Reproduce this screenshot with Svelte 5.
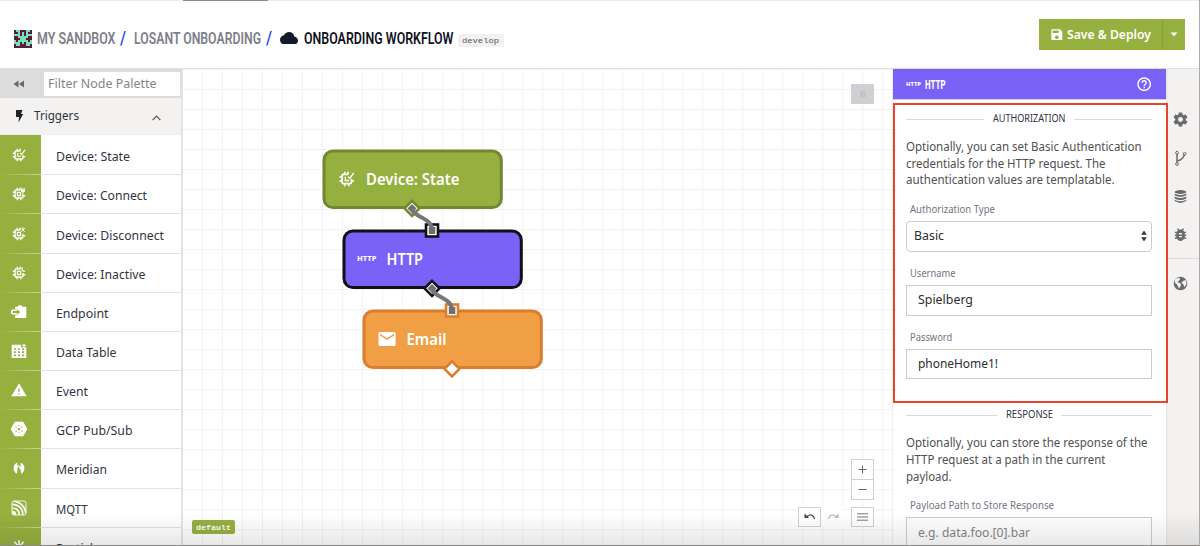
<script>
  const cog = 'M12,15.5A3.5,3.5 0 0,1 8.5,12A3.5,3.5 0 0,1 12,8.5A3.5,3.5 0 0,1 15.5,12A3.5,3.5 0 0,1 12,15.5M19.43,12.97C19.47,12.65 19.5,12.33 19.5,12C19.5,11.67 19.47,11.34 19.43,11L21.54,9.37C21.73,9.22 21.78,8.95 21.66,8.73L19.66,5.27C19.54,5.05 19.27,4.96 19.05,5.05L16.56,6.05C16.04,5.66 15.5,5.32 14.87,5.07L14.5,2.42C14.46,2.18 14.25,2 14,2H10C9.75,2 9.54,2.18 9.5,2.42L9.13,5.07C8.5,5.32 7.96,5.66 7.44,6.05L4.95,5.05C4.73,4.96 4.46,5.05 4.34,5.27L2.34,8.73C2.21,8.95 2.27,9.22 2.46,9.37L4.57,11C4.53,11.34 4.5,11.67 4.5,12C4.5,12.33 4.53,12.65 4.57,12.97L2.46,14.63C2.27,14.78 2.21,15.05 2.34,15.27L4.34,18.73C4.46,18.95 4.73,19.03 4.95,18.95L7.44,17.94C7.96,18.34 8.5,18.68 9.13,18.93L9.5,21.58C9.54,21.82 9.75,22 10,22H14C14.25,22 14.46,21.82 14.5,21.58L14.87,18.93C15.5,18.67 16.04,18.34 16.56,17.94L19.05,18.95C19.27,19.03 19.54,18.95 19.66,18.73L21.66,15.27C21.78,15.05 21.73,14.78 21.54,14.63L19.43,12.97Z';
  const bug = 'M20 8h-2.81c-.45-.78-1.07-1.45-1.82-1.96L17 4.41 15.59 3l-2.17 2.17C12.96 5.06 12.49 5 12 5s-.96.06-1.41.17L8.41 3 7 4.41l1.62 1.63C7.88 6.55 7.26 7.22 6.81 8H4v2h2.09c-.05.33-.09.66-.09 1v1H4v2h2v1c0 .34.04.67.09 1H4v2h2.81c1.04 1.79 2.97 3 5.19 3s4.15-1.21 5.19-3H20v-2h-2.09c.05-.33.09-.66.09-1v-1h2v-2h-2v-1c0-.34-.04-.67-.09-1H20V8zm-6 8h-4v-2h4v2zm0-4h-4v-2h4v2z';
  const cloud = 'M19.35 10.04C18.67 6.59 15.64 4 12 4 9.11 4 6.6 5.64 5.35 8.04 2.34 8.36 0 10.91 0 14c0 3.31 2.69 6 6 6h13c2.76 0 5-2.24 5-5 0-2.64-2.05-4.78-4.65-4.96z';
  const mail = 'M20 4H4c-1.1 0-1.99.9-1.99 2L2 18c0 1.1.9 2 2 2h16c1.1 0 2-.9 2-2V6c0-1.1-.9-2-2-2zm0 4l-8 5-8-5V6l8 5 8-5v2z';
  const help = 'M11 18h2v-2h-2v2zm1-16C6.48 2 2 6.48 2 12s4.48 10 10 10 10-4.48 10-10S17.52 2 12 2zm0 18c-4.41 0-8-3.59-8-8s3.59-8 8-8 8 3.59 8 8-3.59 8-8 8zm0-14c-2.21 0-4 1.79-4 4h2c0-1.1.9-2 2-2s2 .9 2 2c0 2-3 1.75-3 5h2c0-2.25 3-2.5 3-5 0-2.21-1.79-4-4-4z';
  const save = 'M17 3H5c-1.11 0-2 .9-2 2v14c0 1.1.89 2 2 2h14c1.1 0 2-.9 2-2V7l-4-4zm-5 16c-1.66 0-3-1.34-3-3s1.34-3 3-3 3 1.34 3 3-1.34 3-3 3zm3-10H5V5h10v4z';

  const avatar = [
    '.##...##.',
    '..#.#.#..',
    '###.#.###',
    '..#####..',
    '...###...',
    '#.#####.#',
    '###.#.###',
    '.##...##.',
    '.........'
  ];

  const nodes = [
    { icon: 'state', name: 'Device: State', w: 74 },
    { icon: 'connect', name: 'Device: Connect', w: 91 },
    { icon: 'disconnect', name: 'Device: Disconnect', w: 108 },
    { icon: 'inactive', name: 'Device: Inactive', w: 89.5 },
    { icon: 'endpoint', name: 'Endpoint', w: 52.5 },
    { icon: 'table', name: 'Data Table', w: 60.5 },
    { icon: 'event', name: 'Event', w: 32 },
    { icon: 'gcp', name: 'GCP Pub/Sub', w: 76.5 },
    { icon: 'meridian', name: 'Meridian', w: 51 },
    { icon: 'mqtt', name: 'MQTT', w: 31.5 },
    { icon: 'particle', name: 'Particle', w: 44 }
  ];
</script>

{#snippet label(text, w, size, h, base, cls = '')}
  <svg class="label {cls}" width={w} height={h}>
    <text x="0" y={base} font-size={size} textLength={w} lengthAdjust="spacingAndGlyphs">{text}</text>
  </svg>
{/snippet}

{#snippet chip(kind)}
  <g fill="none" stroke="currentColor">
    <path d="M14 5H7Q5 5 5 7v10q0 2 2 2h10q2 0 2-2v-5" stroke-width="2.5" />
    <path d="M9 1v4M14 1v4M9 19v4M15 19v4M1 9h4M1 15h4M19 15h4" stroke-width="2.5" />
    {#if kind === 'state'}
      <path d="M9.800 8.500v5.700h5.700" stroke-width="2" />
      <path d="M14 8.500l2.700 2.500L22.500 3" stroke-width="2" />
    {:else}
      <rect x="9.200" y="9.200" width="5.600" height="5.600" stroke-width="2.200" />
      {#if kind === 'connect'}
        <path d="M17 1v3M21 1v3M19 6v5" stroke-width="1.800" />
        <path d="M15.500 4h7v3l-2 2h-3l-2-2z" fill="currentColor" stroke="none" />
      {:else if kind === 'disconnect'}
        <path d="M16 8l6-6M17 3l5 5M17 2h5" stroke-width="1.700" />
      {:else}
        <path d="M17.500 2v5q1 2 5 2" stroke-width="2.200" />
      {/if}
    {/if}
  </g>
{/snippet}

<div class="app">
  <div class="tabstrip"><span></span></div>
  <header>
    <nav>
      <svg class="avatar" width="18" height="18" viewBox="0 0 9 9" shape-rendering="crispEdges">
        <rect width="9" height="9" fill="#5b1a3e" />
        {#each avatar as row, y}
          {#each row.split('') as cell, x}
            {#if cell === '#'}<rect {x} {y} width="1" height="1" fill="#78e2b6" />{/if}
          {/each}
        {/each}
      </svg>
      {@render label('MY SANDBOX', 78.5, 17.2, 20, 16.2, 'crumb')}
      {@render label('/', 6, 17.5, 20, 16.2, 'slash s1')}
      {@render label('LOSANT ONBOARDING', 127, 17.2, 20, 16.2, 'crumb')}
      {@render label('/', 6, 17.5, 20, 16.2, 'slash s2')}
      <svg class="cloud" width="18" height="12.5" viewBox="0 4 24 16" preserveAspectRatio="none"><path d={cloud} /></svg>
      {@render label('ONBOARDING WORKFLOW', 149.5, 17.2, 20, 16.2, 'crumb current')}
      <span class="version">{@render label('develop', 37, 7.8, 13, 8.8, 'mono')}</span>
    </nav>
    <div class="deploy">
      <div class="main">
        <svg width="11.6" height="11.6" viewBox="2.5 2.500 19 19" fill="#fff"><path d={save} /></svg>
        {@render label('Save & Deploy', 84, 12.9, 20, 14, 'bold')}
      </div>
      <div class="drop"><svg width="8" height="5" viewBox="0 0 8 5"><path d="M.5.5h7L4 4.5z" fill="#fff" /></svg></div>
    </div>
  </header>

  <main>
    <aside class="palette">
      <div class="filter">
        <div class="collapse">
          <svg width="12" height="8" viewBox="0 0 12 8"><path d="M5.5.5v7L.5 4zM11 .5v7L6 4z" fill="#666" /></svg>
        </div>
        <div class="search">{@render label('Filter Node Palette', 108.500, 12.8, 20, 13.8, 'hint')}</div>
      </div>
      <div class="group">
        <svg width="9" height="13" viewBox="0 0 9 13"><path d="M1 0h6.5L6 4h2.2L3.5 12.6 4 7H1z" fill="#222" /></svg>
        {@render label('Triggers', 45, 12.8, 20, 14.3, 'dark')}
        <svg class="chev" width="9" height="6" viewBox="0 0 9 6"><path d="M.6 5.2l3.9-4 3.9 4" fill="none" stroke="#555" stroke-width="1.2" /></svg>
      </div>
      <div class="rows">
        {#each nodes as n}
          <div class="row">
            <div class="ico">
              <svg width="16" height="16" viewBox="0 0 24 24">
                {#if ['state', 'connect', 'disconnect', 'inactive'].includes(n.icon)}
                  <g transform="translate(1.800 1.800) scale(.85)">{@render chip(n.icon)}</g>
                {:else if n.icon === 'endpoint'}
                  <path d="M6 4h4l1.500-2h4L17 4h5q1 0 1 1v15q0 1-1 1H7q-1 0-1-1v-3h4l5-5-5-5H6z" fill="#fff" />
                  <path d="M10 6h9v12h-9z" fill="#fff" />
                  <path d="M0 9.500h2v5H0z" fill="#fff" />
                  <path d="M1 8.300h7.500V6L15 12l-6.500 6v-2.300H1z" fill="#fff" />
                  <path d="M2.500 10.500h6.500V7.800L14 12l-5 4.200v-2.700H2.500z" fill="#96b03f" />
                {:else if n.icon === 'table'}
                  <path d="M1 2.500h14v4h8V22.500H1z" fill="#fff" />
                  <path d="M17 3.500h5M19.500 1v5" stroke="#fff" stroke-width="1.800" />
                  <path d="M4.500 9h3M10.500 9h3M16.500 9h3M4.500 13.700h3M10.500 13.700h3M16.500 13.700h3M4.500 18.400h3M10.500 18.400h3M16.500 18.400h3" stroke="#96b03f" stroke-width="2.600" />
                {:else if n.icon === 'event'}
                  <path d="M.5 21.500h23L12 2 .5 21.500zM13 18.500h-2v-2h2v2zm0-4h-2v-4.500h2v4.500z" fill="#fff" />
                {:else if n.icon === 'gcp'}
                  <path d="M6 1.500h12L24 12 18 22.500H6L0 12z" fill="#fff" stroke="#fff" stroke-linejoin="round" />
                  <g fill="#96b03f"><circle cx="12" cy="12" r="1.900" /><circle cx="12" cy="7" r="1" /><circle cx="7.700" cy="9.300" r="1" /><circle cx="16.300" cy="9.300" r="1" /><circle cx="7.700" cy="15" r="1.200" /><circle cx="16.300" cy="15" r="1.200" /><circle cx="12" cy="17" r="1" /></g>
                {:else if n.icon === 'meridian'}
                  <path d="M9.500 4Q4 6 4 12t4.500 8.500q1.500-4 1-8.500zM14.500 4Q20 6 20 12t-4.500 8.500L14 13z" fill="#fff" />
                  <path d="M8.500 13q1-5 3-4t2.500 5" fill="none" stroke="#fff" stroke-width="1.600" />
                {:else if n.icon === 'mqtt'}
                  <rect x="1.500" y="1.500" width="21" height="21" rx="3" fill="none" stroke="#fff" stroke-width="1.300" />
                  <path d="M2 16q6 0 6 6H2z" fill="#fff" />
                  <g fill="none" stroke="#fff" stroke-width="2.400"><path d="M2 12Q12 12.500 12.500 22M2 6.500Q17 7.500 18 22M5 2Q20 5 22 19" /></g>
                {:else}
                  <path d="M12 12L5 4M12 12V2M12 12l7-8M12 12H1M12 12h11M12 12l-8 8M12 12l8 8" stroke="#fff" stroke-width="2.400" />
                {/if}
              </svg>
            </div>
            <div class="name">{@render label(n.name, n.w, 12.7, 20, 14.800, 'dark')}</div>
          </div>
        {/each}
      </div>
    </aside>

    <section class="canvas">
      <svg class="flow" width="711" height="477" viewBox="183 69 711 477">
        <g class="node">
          <rect x="324" y="151" width="177.300" height="56.600" rx="9" fill="#96b03f" stroke="#72872f" stroke-width="3" />
          <svg x="338.500" y="171" width="16.500" height="16" viewBox="0 0 24 24" color="#fff">{@render chip('state')}</svg>
          <text x="366" y="185.300" font-size="16" textLength="93.500" lengthAdjust="spacingAndGlyphs">Device: State</text>
          <path d="M412 200.800l7.500 7.500-7.500 7.500-7.500-7.500z" fill="#fff" stroke="#72872f" stroke-width="2.600" />
        </g>
        <g class="node">
          <rect x="344" y="231" width="177.300" height="56.600" rx="9" fill="#7a62f6" stroke="#10121a" stroke-width="3" />
          <text class="http" x="357" y="261.300" font-size="6.300" textLength="19.500" lengthAdjust="spacingAndGlyphs">HTTP</text>
          <text x="386.500" y="265.300" font-size="16" textLength="36.500" lengthAdjust="spacingAndGlyphs">HTTP</text>
          <path d="M432 280.800l7.500 7.500-7.500 7.500-7.500-7.500z" fill="#fff" stroke="#10121a" stroke-width="2.600" />
          <rect x="426" y="224.500" width="12" height="12" fill="#fff" stroke="#10121a" stroke-width="2.600" />
        </g>
        <g class="node">
          <rect x="364" y="311" width="177.300" height="56.600" rx="9" fill="#f09f45" stroke="#db7d30" stroke-width="3" />
          <svg x="378.300" y="332" width="17.500" height="14" viewBox="2 4 20 16" preserveAspectRatio="none"><path d={mail} fill="#fff" /></svg>
          <text x="406.500" y="345.300" font-size="16" textLength="40" lengthAdjust="spacingAndGlyphs">Email</text>
          <path d="M452 361.300l7.500 7.500-7.500 7.500-7.500-7.500z" fill="#fff" stroke="#db7d30" stroke-width="2.600" />
          <rect x="446" y="304.500" width="12" height="12" fill="#fff" stroke="#db7d30" stroke-width="2.600" />
        </g>
        {#each [[412, 208.5], [432, 288.500]] as [x, y]}
          <path d="M{x} {y - 4.500}l4.500 4.500-4.500 4.500-4.500-4.500z" fill="#6f6f6f" />
          <path d="M{x} {y}C{x + 2} {y + 10} {x + 19} {y + 8} {x + 20} {y + 21}" fill="none" stroke="#777" stroke-width="4" />
          <rect x={x + 16.800} y={y + 18.500} width="6.500" height="7" fill="#6f6f6f" />
        {/each}
      </svg>
      <div class="debug"><svg width="10" height="10" viewBox="0 0 24 24"><path d={bug} fill="#c1c2bf" /></svg></div>
      <div class="default">{@render label('default', 35, 7.8, 14, 9.700, 'monob')}</div>
      <div class="zoom">
        <span><svg width="9" height="9" viewBox="0 0 9 9"><path d="M4.500.5v8M.5 4.500h8" stroke="#666" /></svg></span>
        <span><svg width="9" height="9" viewBox="0 0 9 9"><path d="M.5 4.500h8" stroke="#666" /></svg></span>
      </div>
      <div class="tools">
        <span class="box"><svg width="12" height="8" viewBox="0 0 12 8"><path d="M.5.5v4.500h4.500z" fill="#444" /><path d="M2 4.500Q6 0 9.500 3.500L10.500 6" fill="none" stroke="#444" stroke-width="1.200" /></svg></span>
        <span class="redo"><svg width="12" height="8" viewBox="0 0 12 8"><path d="M11.500.5v4.500H7z" fill="#bbb" /><path d="M10 4.500Q6 0 2.500 3.500L1.500 6" fill="none" stroke="#bbb" stroke-width="1.200" /></svg></span>
        <span class="box menu"><svg width="11" height="8" viewBox="0 0 11 8"><path d="M0 .8h11M0 4h11M0 7.200h11" stroke="#777" /></svg></span>
      </div>
    </section>

    <aside class="panel">
      <div class="head">
        {@render label('HTTP', 15, 5.300, 14, 8.700, 'http')}
        {@render label('HTTP', 20.500, 12.600, 20, 14.500, 'cond')}
        <svg class="help" width="16.400" height="16.400" viewBox="0 0 24 24" fill="#fff"><path d={help} /></svg>
      </div>
      <div class="body">
        <div class="title"><i></i>{@render label('AUTHORIZATION', 72.500, 9.900, 16, 12, 'dark')}<i></i></div>
        <div class="para">
          {@render label('Optionally, you can set Basic Authentication', 235.500, 12.300, 16.700, 12.700, 'body-text')}
          {@render label('credentials for the HTTP request. The', 199.500, 12.300, 16.700, 12.700, 'body-text')}
          {@render label('authentication values are templatable.', 208.500, 12.300, 16.700, 13, 'body-text')}
        </div>
        <div class="field">
          {@render label('Authorization Type', 85, 10.200, 14, 11, 'muted')}
          <div class="input select">
            {@render label('Basic', 30, 12.700, 20, 14.200, 'ink')}
            <svg width="6" height="12" viewBox="0 0 6 12"><path d="M3 .6L5.800 4.800H.2zM3 11.400L.2 7.200h5.600z" fill="#333" /></svg>
          </div>
        </div>
        <div class="field">
          {@render label('Username', 45.500, 10.200, 14, 11, 'muted')}
          <div class="input">{@render label('Spielberg', 55, 12.700, 20, 14, 'ink')}</div>
        </div>
        <div class="field">
          {@render label('Password', 42.300, 10.200, 14, 11, 'muted')}
          <div class="input">{@render label('phoneHome1!', 80, 12.700, 20, 14, 'ink')}</div>
        </div>
        <div class="title second"><i></i>{@render label('RESPONSE', 47, 9.900, 16, 12, 'dark')}<i></i></div>
        <div class="para">
          {@render label('Optionally, you can store the response of the', 241.500, 12.300, 16.700, 12.600, 'body-text')}
          {@render label('HTTP request at a path in the current', 199.500, 12.300, 16.700, 12.600, 'body-text')}
          {@render label('payload.', 45.500, 12.300, 16.700, 12.600, 'body-text')}
        </div>
        <div class="field">
          {@render label('Payload Path to Store Response', 144, 10.200, 14, 10.300, 'muted')}
          <div class="input">{@render label('e.g. data.foo.[0].bar', 112, 12.700, 20, 14, 'hint')}</div>
        </div>
      </div>
    </aside>

    <aside class="rail">
      <svg width="17" height="17" viewBox="0 0 24 24"><path d={cog} /></svg>
      <svg width="17" height="17" viewBox="0 0 17 17" fill="none" stroke="#6b6b6b"><path d="M5 4v9M5 11q6-1 7.500-6.500" stroke-width="1.500" /><circle cx="5" cy="2.800" r="1.400" /><circle cx="5" cy="14" r="1.400" /><circle cx="12.600" cy="3.800" r="1.400" /></svg>
      <svg width="17" height="17" viewBox="0 0 17 17"><ellipse cx="8.500" cy="4" rx="5.800" ry="1.900" /><path d="M2.700 5.400q5.800 3 11.600 0v1.900q-5.800 3-11.600 0zM2.700 8.600q5.800 3 11.600 0v1.900q-5.800 3-11.600 0zM2.700 11.800q5.800 3 11.600 0v1.300q-5.800 3.600-11.600 0z" /></svg>
      <svg width="17" height="17" viewBox="0 0 24 24"><path d={bug} /></svg>
      <hr />
      <svg width="17" height="17" viewBox="0 0 17 17"><circle cx="8.500" cy="8.500" r="6.800" /><path d="M3 4.500Q5 2.700 7.500 2.800L8 4.500 5.500 7 8.500 8.500l.5 2L7 13.500 5 9.500 2.800 7.500zM11 6l3-1 .5 4-2 3-1.500-3-1.500-1z" fill="#f3f2f1" /></svg>
    </aside>
  </main>

  <div class="highlight"></div>
  <div class="shade"></div>
  <div class="edge"></div>
</div>

<style>
  :global(body) { overflow: hidden; background: #fff; }
  .app {
    position: relative; width: 1200px; height: 546px; overflow: hidden;
    display: flex; flex-direction: column; background: #fff;
    font-family: "Noto Sans", "Open Sans", sans-serif;
  }
  svg { display: block; flex: none; }
  .label { overflow: visible; }
  .dark { fill: #30343f; }
  .body-text { fill: #505050; }
  .muted { fill: #72757f; }
  .ink { fill: #2c2c2c; }
  .hint { fill: #858585; }
  .bold { fill: #fff; font-weight: 600; }
  .mono { fill: #555; font-family: "Liberation Mono", monospace; }
  .monob { fill: #fff; font-family: "Liberation Mono", monospace; font-weight: 700; }
  .http { fill: #fff; font-weight: 800; }
  .cond { fill: #fff; font-family: Roboto, sans-serif; font-weight: 800; }

  .tabstrip { height: 1px; flex: none; background: #ececec; display: flex; padding-left: 183px; }
  .tabstrip span { width: 85px; background: #8c8c8c; }
  header {
    height: 67px; flex: none; border-bottom: 1px solid #e0e0e0; display: flex; justify-content: space-between;
    padding: 0 15.500px 0 14px;
  }
  nav { display: flex; align-items: flex-start; padding-top: 27px; }
  .avatar { margin: 2px 4.700px 0 0; }
  .crumb { fill: #7d808a; font-family: Roboto, sans-serif; font-weight: 600; }
  .current { fill: #10131e; margin-left: 6px; }
  .slash { fill: #2442f5; font-family: Roboto, sans-serif; font-weight: 500; }
  .s1 { margin: 0 7.500px 0 5px; }
  .s2 { margin: 0 8px 0 5px; }
  .cloud { fill: #141b2b; margin-top: 3.500px; }
  .version { background: #f2f1f0; border-radius: 2px; padding: 0 4.500px; margin: 5.500px 0 0 4.800px; height: 13px; }
  .deploy { display: flex; height: 31px; margin-top: 18px; color: #fff; }
  .deploy .main { width: 122.500px; background: #96b03f; display: flex; align-items: center; gap: 4px; padding-left: 12px; box-sizing: border-box; }
  .deploy .drop { width: 23px; background: #96b03f; border-left: 1px solid #87a036; box-sizing: border-box; display: flex; align-items: center; justify-content: center; }

  main { flex: 1; min-height: 0; display: flex; }
  .palette { width: 183px; flex: none; box-sizing: border-box; border-right: 2px solid #e4e4e4; display: flex; flex-direction: column; overflow: hidden; }
  .filter { height: 29px; flex: none; background: #dcdcdc; display: flex; align-items: center; }
  .collapse { width: 43.500px; flex: none; padding-left: 13px; box-sizing: border-box; }
  .search { flex: 1; height: 24px; background: #fff; display: flex; align-items: center; padding-left: 4.800px; border-right: 1px solid #dcdcdc; }
  .group { height: 37.300px; flex: none; background: #f3f2f1; display: flex; align-items: center; padding: 0 20px 0 15px; border-bottom: 1px solid #eee; box-sizing: border-box; }
  .group .dark { margin-left: 9.700px; }
  .group .chev { margin: 3px 0 0 auto; }
  .row { height: 39.170px; display: flex; }
  .row:first-child { height: 40px; }
  .ico { width: 40.500px; background: #96b03f; display: flex; align-items: center; justify-content: center; color: #fff; padding-right: 2px; box-sizing: border-box; border-bottom: 1px solid; border-image: linear-gradient(to right, #96b03f, #c9d79c) 1; }
  .name { flex: 1; padding-left: 15px; display: flex; align-items: center; border-bottom: 1px solid #e2e2e2; box-sizing: border-box; padding-top: 2px; }

  .canvas {
    position: relative; width: 710px; flex: none; overflow: hidden;
    background-image: linear-gradient(to right, #f2f2f2 1px, transparent 1px), linear-gradient(#f2f2f2 1px, transparent 1px);
    background-size: 20.030px 20.030px; background-position: 19px 20px;
  }
  .node text { fill: #fff; font-weight: 600; }
  .node text.http { font-weight: 800; }
  .debug { position: absolute; left: 668px; top: 15px; width: 23px; height: 20px; background: #cfd0d3; display: flex; align-items: center; justify-content: center; }
  .default { position: absolute; left: 9px; top: 451px; width: 43px; height: 14px; background: #96b03f; border-radius: 2px; display: flex; justify-content: center; }
  .zoom { position: absolute; left: 668px; top: 390px; width: 21px; height: 39px; border: 1px solid #d0d0d0; background: #fff; display: flex; flex-direction: column; }
  .zoom span { flex: 1; display: flex; align-items: center; justify-content: center; }
  .zoom span + span { border-top: 1px solid #d0d0d0; }
  .tools { position: absolute; left: 615px; top: 438px; display: flex; }
  .tools span { width: 23px; height: 20px; box-sizing: border-box; display: flex; align-items: center; justify-content: center; background: #fff; }
  .tools .box { border: 1px solid #d0d0d0; }
  .tools .redo { width: 23px; }
  .tools .menu { margin-left: 7px; }

  .panel { width: 273px; flex: none; background: #fff; box-shadow: 0 0 2px #ccc; position: relative; overflow: hidden; }
  .head { height: 31px; background: #7a62f6; border-bottom: 1px solid #cfcae8; box-sizing: border-box; display: flex; align-items: center; padding: 0 14px 0 13px; }
  .head .cond { margin-left: 4px; }
  .head .help { margin-left: auto; }
  .body { padding: 10px 14px 0 13.300px; }
  .title { display: flex; align-items: center; gap: 8.500px; margin-bottom: 12px; }
  .title i { flex: 1; height: 1px; background: #dadada; margin-top: 2px; }
  .second { margin-top: 27px; }
  .field { margin-top: 14.200px; }
  .field > .label { margin-left: 3.500px; }
  .input { margin-top: 4.800px; height: 30.800px; border: 1px solid #ccc; box-sizing: border-box; display: flex; align-items: center; padding-left: 11px; }
  .select { border-radius: 4px; padding: 0 4px 0 7px; justify-content: space-between; }

  .rail { flex: 1; background: #f3f2f1; display: flex; flex-direction: column; align-items: flex-start; padding: 42.400px 0 0 5.500px; gap: 21.300px; fill: #6b6b6b; }
  .rail hr { align-self: stretch; border: 0; border-top: 1px solid #dcdcdc; margin: -6.500px 0 -5.500px -5.500px; flex: none; }

  .highlight { position: absolute; left: 893px; top: 102.500px; width: 271px; height: 296px; border: 2px solid #e8432d; }
  .shade { position: absolute; left: 0; right: 0; bottom: 0; height: 34px; background: linear-gradient(transparent, rgba(0, 0, 0, .09)); border-bottom: 1px solid #8a8787; box-sizing: border-box; }
  .edge { position: absolute; right: 0; top: 0; bottom: 0; width: 1.500px; background: #aaa; }
</style>
